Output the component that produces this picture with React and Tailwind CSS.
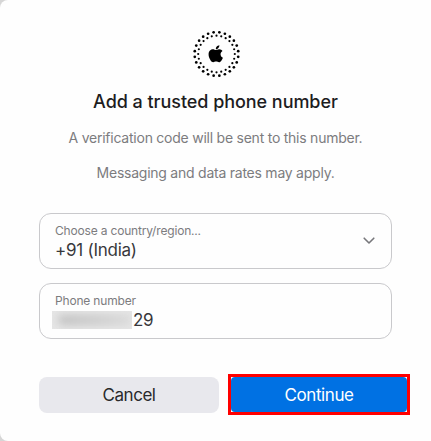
import { FaApple } from "react-icons/fa";

const STEPS = Array.from({ length: 24 }, (_, i) => i);

function point(radius, degrees) {
  const a = (degrees * Math.PI) / 180;
  return { cx: 24.5 + radius * Math.sin(a), cy: 24 - radius * Math.cos(a) };
}

function TrustedLogo() {
  return (
    <div className="grid h-12 w-12 place-items-center text-black">
      <svg viewBox="0 0 48 48" className="col-start-1 row-start-1 h-12 w-12" fill="currentColor">
        {STEPS.map((i) => (
          <circle key={`o${i}`} {...point(21.9, i * 15 + 7.5)} r="1.35" />
        ))}
        {STEPS.map((i) => (
          <circle key={`i${i}`} {...point(18.3, i * 15)} r="1.1" />
        ))}
      </svg>
      <FaApple className="col-start-1 row-start-1 mb-px ml-px h-[19.5px] w-[19.5px]" />
    </div>
  );
}

export default function App() {
  return (
    <div className="h-[441px] w-[431px] overflow-hidden bg-[#d6d6d6] font-['Inter','Liberation_Sans',sans-serif]">
      <main className="flex h-full w-full flex-col rounded-l-[8px] bg-[#fefefe] pl-[39px] pt-[30px]">
        <header className="flex w-[353px] flex-col items-center whitespace-nowrap">
          <TrustedLogo />
          <h1 className="mt-3 text-[18px] font-medium leading-6 tracking-[-0.05px] text-[#1d1d1f]">Add a trusted phone number</h1>
          <p className="mt-[14px] text-[14px] leading-5 tracking-[-0.24px] text-[#7c7c7e]">A verification code will be sent to this number.</p>
          <p className="mt-[15px] text-[14px] leading-5 tracking-[-0.24px] text-[#7c7c7e]">Messaging and data rates may apply.</p>
        </header>
        <button className="mt-[30px] flex h-14 w-[353px] items-center justify-between rounded-xl border border-[#c9c9cc] pl-[15px] pr-4 text-left">
          <span className="flex flex-col pt-px">
            <span className="text-[12px] leading-4 tracking-[-0.18px] text-[#7c7c7e]">Choose a country/region...</span>
            <span className="text-[17px] leading-[22px] tracking-[-0.25px] text-[#38383b]">+91 (India)</span>
          </span>
          <svg viewBox="0 0 12 8" className="h-2 w-3" fill="none" stroke="#77777b" strokeWidth="1.6" strokeLinecap="round" strokeLinejoin="round">
            <path d="M1.2 1.2 6 6l4.8-4.8" />
          </svg>
        </button>
        <div className="mt-[14px] flex h-14 w-[353px] flex-col justify-center rounded-xl border border-[#c9c9cc] pl-[15px] pt-px">
          <span className="text-[12px] leading-4 tracking-[-0.18px] text-[#7c7c7e]">Phone number</span>
          <span className="-ml-[3px] flex items-center text-[17px] leading-[22px] tracking-[-0.25px] text-[#38383b]">
            <span className="mt-px flex h-[18px] w-20 items-center overflow-hidden bg-[#e6e6e6] pl-1.5">
              <span className="h-2.5 w-full rounded-full bg-gradient-to-r from-[#c0c0c0] via-[#cbcbcb] to-[#dadada] blur-[4px]" />
            </span>
            <span className="ml-px">29</span>
          </span>
        </div>
        <div className="mt-[35px] flex items-center gap-[9px]">
          <button className="h-9 w-[180px] rounded-lg bg-[#e8e8ed] pt-0.5 text-[17px] tracking-[-0.45px] text-[#29292b]">Cancel</button>
          <div className="h-[41px] w-[182px] border-[3px] border-[#ff0000] bg-white">
            <button className="h-full w-full rounded-[4px] bg-[#0071e3] pt-0.5 text-[17px] tracking-[-0.4px] text-white">Continue</button>
          </div>
        </div>
      </main>
    </div>
  );
}
